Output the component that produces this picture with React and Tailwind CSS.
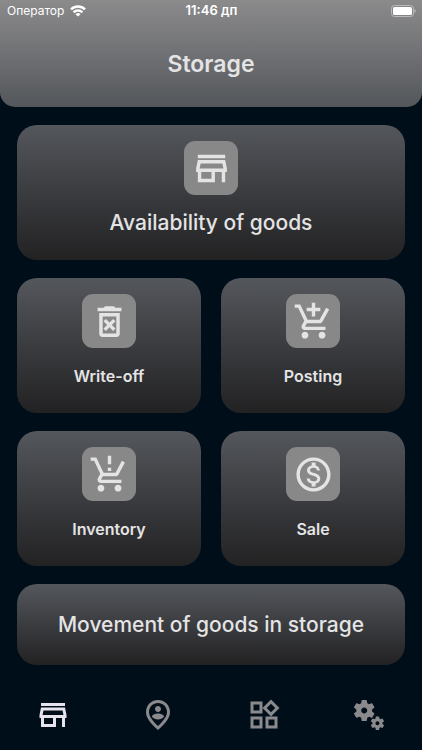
import React from "react";
import {
  MdOutlineStore,
  MdOutlineAddShoppingCart,
  MdProductionQuantityLimits,
  MdOutlineMonetizationOn,
  MdOutlinePersonPinCircle,
  MdOutlineWidgets,
  MdMiscellaneousServices,
} from "react-icons/md";

function TrashIcon({ className }) {
  return (
    <svg viewBox="0 0 24 24" fill="currentColor" className={className} aria-hidden="true">
      <path d="M14.12 10.47 12 12.59 9.87 10.47 8.46 11.88 10.59 14 8.47 16.12 9.88 17.53 12 15.41 14.12 17.53 15.53 16.12 13.41 14 15.53 11.88 14.12 10.47M15.5 4 14.5 3H9.5L8.5 4H5V6H19V4H15.5M6 19A2 2 0 0 0 8 21H16A2 2 0 0 0 18 19V7H6V19M8 9H16V19H8V9Z" />
    </svg>
  );
}

function WifiIcon() {
  return (
    <svg viewBox="0 0 16 12" className="h-3 w-4" fill="none" stroke="currentColor" strokeWidth="2.4" aria-hidden="true">
      <path d="M1 4.400a10 10 0 0 1 14 0" />
      <path d="M3.600 7.300a6.300 6.300 0 0 1 8.800 0" />
      <path d="M8 11.600 5.500 9.200a3.500 3.500 0 0 1 5 0z" fill="currentColor" stroke="none" />
    </svg>
  );
}

function BatteryIcon() {
  return (
    <svg viewBox="0 0 25 12" className="h-3 w-[25px]" aria-hidden="true">
      <rect x="0.5" y="0.5" width="22" height="11" rx="3" fill="none" stroke="#b9b9ba" />
      <rect x="2" y="2" width="19" height="8" rx="1.5" fill="#fff" />
      <path d="M23.5 4v4c.8-.3 1.3-1.100 1.300-2s-.5-1.700-1.300-2z" fill="#b9b9ba" />
    </svg>
  );
}

function Card({ icon: Icon, label, large, wide }) {
  return (
    <button
      type="button"
      className={`flex h-[135px] flex-col items-center rounded-[20px] bg-linear-to-b from-[#54575c] via-[#3b3c40] to-[#222223] pt-4 ${wide ? "col-span-2" : ""}`}
    >
      <span className="flex size-[54px] items-center justify-center rounded-[11px] bg-[#888888]">
        <Icon className="size-[41px]" />
      </span>
      <span className={`mt-4 leading-6 ${large ? "text-[21px] font-medium" : "text-base font-semibold"}`}>{label}</span>
    </button>
  );
}

const tabs = [
  { icon: MdOutlineStore, label: "Storage", active: true },
  { icon: MdOutlinePersonPinCircle, label: "Clients" },
  { icon: MdOutlineWidgets, label: "Catalog" },
  { icon: MdMiscellaneousServices, label: "Settings" },
];

export default function App() {
  return (
    <div className="flex min-h-screen flex-col bg-[#000e1a] font-['Inter','Noto_Sans',sans-serif] text-[#e4e4e5]">
      <header className="rounded-b-[15px] bg-linear-to-b from-[#8b8b8c] via-[#707174] to-[#53565a]">
        <div className="grid h-[22px] grid-cols-3 items-center pr-1.5 pl-[7px] text-xs text-white">
          <div className="flex items-center gap-1.5">
            <span>Оператор</span>
            <WifiIcon />
          </div>
          <span className="text-center text-[13px] font-semibold">11:46 дп</span>
          <div className="flex justify-end">
            <BatteryIcon />
          </div>
        </div>
        <h1 className="pt-[26px] pb-[27px] text-center text-[23px] leading-8 font-semibold">Storage</h1>
      </header>

      <main className="grid grid-cols-2 gap-x-5 gap-y-[18px] px-[17px] pt-[18px]">
        <Card icon={MdOutlineStore} label="Availability of goods" large wide />
        <Card icon={TrashIcon} label="Write-off" />
        <Card icon={MdOutlineAddShoppingCart} label="Posting" />
        <Card icon={MdProductionQuantityLimits} label="Inventory" />
        <Card icon={MdOutlineMonetizationOn} label="Sale" />
        <button
          type="button"
          className="col-span-2 h-[81px] rounded-[20px] bg-linear-to-b from-[#54575c] via-[#3b3c40] to-[#222223] text-[21px] font-medium"
        >
          Movement of goods in storage
        </button>
      </main>

      <nav className="grid grid-cols-4 pt-8">
        {tabs.map(({ icon: Icon, label, active }) => (
          <button
            key={label}
            type="button"
            aria-label={label}
            className={`flex justify-center ${active ? "text-[#e6e3ee]" : "text-[#8a8a8d]"}`}
          >
            <Icon className="size-9" />
          </button>
        ))}
      </nav>
    </div>
  );
}
